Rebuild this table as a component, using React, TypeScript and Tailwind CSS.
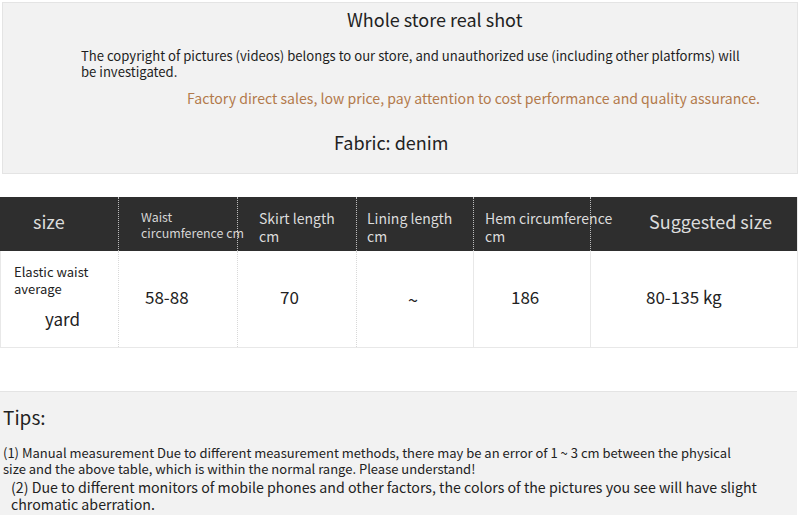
const font = { fontFamily: '"Noto Sans CJK SC", "Noto Sans", sans-serif' };

const headers = [
  { w: 'w-[118px]', content: <div className="flex h-full items-center pb-[6px] pl-[33px] text-[18px]">size</div> },
  {
    w: 'w-[119px]',
    content: (
      <div className="whitespace-nowrap pl-[22px] pt-[12px] text-[12.4px] leading-[16px] text-[#d6d6d6]">
        Waist
        <br />
        circumference cm
      </div>
    ),
  },
  {
    w: 'w-[119px]',
    content: (
      <div className="whitespace-nowrap pl-[21px] pt-[12px] text-[14px] leading-[18px]">
        Skirt length
        <br />
        cm
      </div>
    ),
  },
  {
    w: 'w-[117px]',
    content: (
      <div className="whitespace-nowrap pl-[10px] pt-[12px] text-[14px] leading-[18px]">
        Lining length
        <br />
        cm
      </div>
    ),
  },
  {
    w: 'w-[117px]',
    content: (
      <div className="whitespace-nowrap pl-[11px] pt-[12px] text-[14px] leading-[18px]">
        Hem circumference
        <br />
        cm
      </div>
    ),
  },
  {
    w: 'flex-1',
    content: <div className="flex h-full items-center pb-[6px] pl-[58px] text-[18px]">Suggested size</div>,
  },
];

export default function App() {
  return (
    <div className="h-[515px] w-[800px] overflow-hidden bg-white text-[#222]" style={font}>
      {/* top info panel */}
      <div className="mx-[2px] mt-[2px] h-[172px] border border-[#e4e4e4] bg-[#f2f2f2]">
        <div className="pt-[3px] pl-[344px] text-[18px] leading-[26px]">Whole store real shot</div>
        <div className="mt-[16px] w-[745px] pl-[78px] text-[13.1px] leading-[16px] text-[#1e1e1e]">
          The copyright of pictures (videos) belongs to our store, and unauthorized use (including other platforms) will be investigated.
        </div>
        <div className="mt-[8px] pl-[184px] text-[14.1px] leading-[20px] text-[#b27a4c]">
          Factory direct sales, low price, pay attention to cost performance and quality assurance.
        </div>
        <div className="mt-[22px] pl-[331px] text-[18px] leading-[24px]">Fabric: denim</div>
      </div>

      {/* size table */}
      <div className="mt-[23px] w-[798px] border-r border-[#e8e8e8]">
        <div className="flex h-[54px] bg-[#2e2e2e] text-[#dcdcdc]">
          {headers.map((h, i) => (
            <div
              key={i}
              className={`${h.w} h-full overflow-visible ${i > 0 ? 'border-l border-dotted border-[#bdbdbd]' : ''}`}
            >
              {h.content}
            </div>
          ))}
        </div>
        <div className="flex h-[97px] border-b border-[#e8e8e8]">
          <div className="w-[118px] border-l border-[#e8e8e8] pl-[13px] pt-[12px]">
            <div className="text-[13px] leading-[17px]">
              Elastic waist
              <br />
              average
            </div>
            <div className="mt-[11px] pl-[31px] text-[17px] leading-[22px]">yard</div>
          </div>
          <div className="flex w-[119px] items-center border-l border-dotted border-[#d8d8d8] pb-[4px] pl-[26px] text-[17px]">
            58-88
          </div>
          <div className="flex w-[119px] items-center border-l border-dotted border-[#d8d8d8] pb-[4px] pl-[42px] text-[17px]">
            70
          </div>
          <div className="flex w-[117px] items-center border-l border-dotted border-[#d8d8d8] pl-[51px] text-[18px]">
            ~
          </div>
          <div className="flex w-[117px] items-center border-l border-[#e8e8e8] pb-[4px] pl-[37px] text-[17px]">
            186
          </div>
          <div className="flex flex-1 items-center border-l border-[#e8e8e8] pb-[4px] pl-[55px] text-[17px]">
            80-135 kg
          </div>
        </div>
      </div>

      {/* tips panel */}
      <div className="mt-[43px] h-[130px] w-[797px] border-t border-[#e4e4e4] bg-[#f2f2f2] pt-[12px]">
        <div className="pl-[3px] text-[19px] leading-[26px]">Tips:</div>
        <div className="mt-[15px] w-[745px] pl-[3px] text-[13px] leading-[16px]">
          (1) Manual measurement Due to different measurement methods, there may be an error of 1 ~ 3 cm between the physical size and the above table, which is within the normal range. Please understand!
        </div>
        <div className="mt-[2px] w-[775px] pl-[11px] text-[14.2px] leading-[17px]">
          (2) Due to different monitors of mobile phones and other factors, the colors of the pictures you see will have slight chromatic aberration.
        </div>
      </div>
    </div>
  );
}
